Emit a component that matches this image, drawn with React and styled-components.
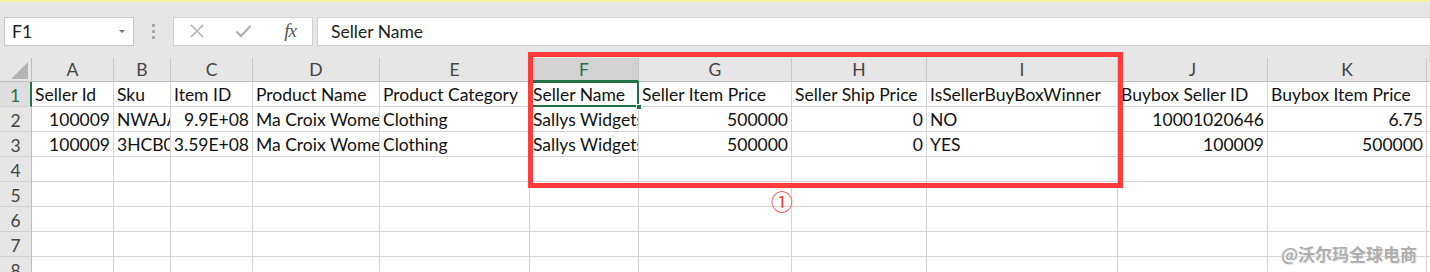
import React from "react";
import styled, { createGlobalStyle } from "styled-components";

const GlobalStyle = createGlobalStyle`
  html, body { margin: 0; padding: 0; background: #ffffff; }
  body { width: 1430px; height: 272px; overflow: hidden; font-family: "Lato", "Liberation Sans", sans-serif; }
  * { box-sizing: border-box; }
`;

const FONT = `"Lato", "Liberation Sans", sans-serif`;

const Page = styled.div`
  position: relative;
  width: 1430px;
  height: 272px;
  overflow: hidden;
  background: #ffffff;
`;

const Toolbar = styled.div`
  display: flex;
  align-items: center;
  height: 58px;
  padding: 2px 0 0 4px;
  background: #e6e6e6;
  border-top: 2px solid #f6efa6;
`;

const NameBox = styled.div`
  display: flex;
  align-items: center;
  justify-content: space-between;
  width: 130px;
  height: 29px;
  padding: 0 8px 0 7px;
  background: #ffffff;
  border: 1px solid #c6c6c6;
  font-family: ${FONT};
  font-size: 17.5px;
  color: #222;
`;

const Caret = styled.span`
  width: 0;
  height: 0;
  border-left: 3px solid transparent;
  border-right: 3px solid transparent;
  border-top: 3px solid #777;
`;

const Grip = styled.div`
  width: 39px;
  display: flex;
  flex-direction: column;
  align-items: center;
  gap: 3px;
`;

const Dot = styled.span`
  width: 3px;
  height: 3px;
  background: #a9a9a9;
`;

const FxBox = styled.div`
  display: flex;
  align-items: center;
  width: 140px;
  height: 29px;
  background: #ffffff;
  border: 1px solid #d0d0d0;
  padding-left: 14px;
`;

const FxButton = styled.span`
  display: flex;
  align-items: center;
  justify-content: center;
  width: ${(p) => p.$w}px;
`;

const FxLabel = styled.span`
  font-family: "Liberation Serif", serif;
  font-style: italic;
  font-size: 19px;
  color: #555;
  letter-spacing: -1px;
`;

const FormulaInput = styled.div`
  flex: 1;
  height: 29px;
  margin-left: 4px;
  background: #ffffff;
  border: 1px solid #d0d0d0;
  border-right: none;
  display: flex;
  align-items: center;
  padding-left: 13px;
  font-family: ${FONT};
  font-size: 17.5px;
  color: #222;
`;

const Sheet = styled.div`
  display: grid;
  grid-template-columns: ${(p) => p.$cols};
  grid-template-rows: 24px;
  grid-auto-rows: 25px;
  font-family: ${FONT};
  font-size: 17.5px;
`;

const Corner = styled.div`
  background: #e6e6e6;
  border-right: 1px solid #bdbdbd;
  border-bottom: 1px solid #bdbdbd;
  display: flex;
  align-items: flex-end;
  justify-content: flex-end;
  padding: 0 3px 2px 0;
`;

const ColHead = styled.div`
  display: flex;
  align-items: center;
  justify-content: center;
  background: ${(p) => (p.$active ? "#d2d2d2" : "#e6e6e6")};
  color: ${(p) => (p.$active ? "#217346" : "#444")};
  border-right: 1px solid #c8c8c8;
  border-bottom: ${(p) => (p.$active ? "2px solid #217346" : "1px solid #bdbdbd")};
  padding-top: ${(p) => (p.$active ? "1px" : "0")};
  font-size: 17.5px;
`;

const RowHead = styled.div`
  display: flex;
  align-items: center;
  justify-content: center;
  background: ${(p) => (p.$active ? "#dedede" : "#e6e6e6")};
  color: ${(p) => (p.$active ? "#217346" : "#444")};
  border-right: ${(p) => (p.$active ? "2px solid #217346" : "1px solid #bdbdbd")};
  border-bottom: 1px solid #d0d0d0;
  font-size: 17.5px;
  padding-top: 2px;
`;

const Cell = styled.div`
  position: relative;
  display: flex;
  align-items: flex-end;
  justify-content: ${(p) => (p.$right ? "flex-end" : "flex-start")};
  padding: 0 3px 1px 3px;
  border-right: 1px solid #d4d4d4;
  border-bottom: 1px solid #d4d4d4;
  white-space: nowrap;
  overflow: ${(p) => (p.$selected ? "visible" : "hidden")};
  color: #111;
  line-height: 21px;
  ${(p) =>
    p.$selected &&
    `
    &::after {
      content: "";
      position: absolute;
      left: -1px; top: -1px; right: -1px; bottom: -1px;
      border: 2px solid #217346;
      pointer-events: none;
    }
  `}
`;

const Clip = styled.span`
  display: block;
  overflow: hidden;
  max-width: 100%;
`;

const Handle = styled.span`
  position: absolute;
  right: -4px;
  bottom: -4px;
  width: 6px;
  height: 6px;
  background: #217346;
  border: 1px solid #ffffff;
  z-index: 2;
`;

const Highlight = styled.div`
  position: absolute;
  left: 528px;
  top: 52px;
  width: 595px;
  height: 136px;
  border: 5px solid #ff3b3b;
  pointer-events: none;
`;

const Marker = styled.div`
  position: absolute;
  left: 771px;
  top: 187px;
  font-family: "Noto Sans CJK SC", "DejaVu Sans", sans-serif;
  font-size: 22px;
  line-height: 26px;
  color: #ff3b3b;
`;

const Watermark = styled.div`
  position: absolute;
  left: 1281px;
  top: 241px;
  font-family: "Noto Sans CJK SC", sans-serif;
  font-weight: 700;
  font-size: 17px;
  line-height: 26px;
  color: #adadad;
  text-shadow: 0 0 1px #ffffff, 1px 1px 1px #e4e4e4;
`;

const columns = [
  { key: "A", w: 82 },
  { key: "B", w: 57 },
  { key: "C", w: 82 },
  { key: "D", w: 127 },
  { key: "E", w: 150 },
  { key: "F", w: 109 },
  { key: "G", w: 153 },
  { key: "H", w: 135 },
  { key: "I", w: 191 },
  { key: "J", w: 150 },
  { key: "K", w: 159 },
  { key: "", w: 0 },
];

const R = (v) => ({ v, r: true });

const data = [
  ["Seller Id", "Sku", "Item ID", "Product Name", "Product Category", "Seller Name", "Seller Item Price", "Seller Ship Price", "IsSellerBuyBoxWinner", "Buybox Seller ID", "Buybox Item Price", ""],
  [R("100009"), "NWAJA7KLM", R("9.9E+08"), "Ma Croix Womens Top", "Clothing", "Sallys Widgets", R("500000"), R("0"), "NO", R("10001020646"), R("6.75"), ""],
  [R("100009"), "3HCB0QX21", R("3.59E+08"), "Ma Croix Womens Top", "Clothing", "Sallys Widgets", R("500000"), R("0"), "YES", R("100009"), R("500000"), ""],
  [], [], [], [], [],
];

const XIcon = () => (
  <svg width="16" height="16" viewBox="0 0 16 16">
    <path d="M2 2 L14 14 M14 2 L2 14" stroke="#b3b3b3" strokeWidth="1.6" fill="none" />
  </svg>
);

const CheckIcon = () => (
  <svg width="17" height="14" viewBox="0 0 17 14">
    <path d="M1.5 7.5 L6 12 L15.5 2" stroke="#b3b3b3" strokeWidth="2.4" fill="none" />
  </svg>
);

const CornerTriangle = () => (
  <svg width="17" height="17" viewBox="0 0 17 17">
    <polygon points="17,0 17,17 0,17" fill="#b4b4b4" />
  </svg>
);

export default function App() {
  const template = "32px " + columns.map((c) => (c.w ? `${c.w}px` : "1fr")).join(" ");
  return (
    <Page>
      <GlobalStyle />
      <Toolbar>
        <NameBox>
          F1
          <Caret />
        </NameBox>
        <Grip>
          <Dot />
          <Dot />
          <Dot />
        </Grip>
        <FxBox>
          <FxButton $w={17}>
            <XIcon />
          </FxButton>
          <FxButton $w={76}>
            <CheckIcon />
          </FxButton>
          <FxButton $w={18}>
            <FxLabel>fx</FxLabel>
          </FxButton>
        </FxBox>
        <FormulaInput>Seller Name</FormulaInput>
      </Toolbar>
      <Sheet $cols={template}>
        <Corner>
          <CornerTriangle />
        </Corner>
        {columns.map((c, i) => (
          <ColHead key={"h" + i} $active={c.key === "F"}>
            {c.key}
          </ColHead>
        ))}
        {data.map((row, ri) => (
          <React.Fragment key={"r" + ri}>
            <RowHead $active={ri === 0}>{ri + 1}</RowHead>
            {columns.map((c, ci) => {
              const raw = row[ci];
              const val = raw && typeof raw === "object" ? raw.v : raw || "";
              const right = raw && typeof raw === "object";
              const selected = ri === 0 && c.key === "F";
              return (
                <Cell key={ci} $right={right} $selected={selected}>
                  {selected ? <Clip>{val}</Clip> : val}
                  {selected && <Handle />}
                </Cell>
              );
            })}
          </React.Fragment>
        ))}
      </Sheet>
      <Highlight />
      <Marker>①</Marker>
      <Watermark>@沃尔玛全球电商</Watermark>
    </Page>
  );
}
